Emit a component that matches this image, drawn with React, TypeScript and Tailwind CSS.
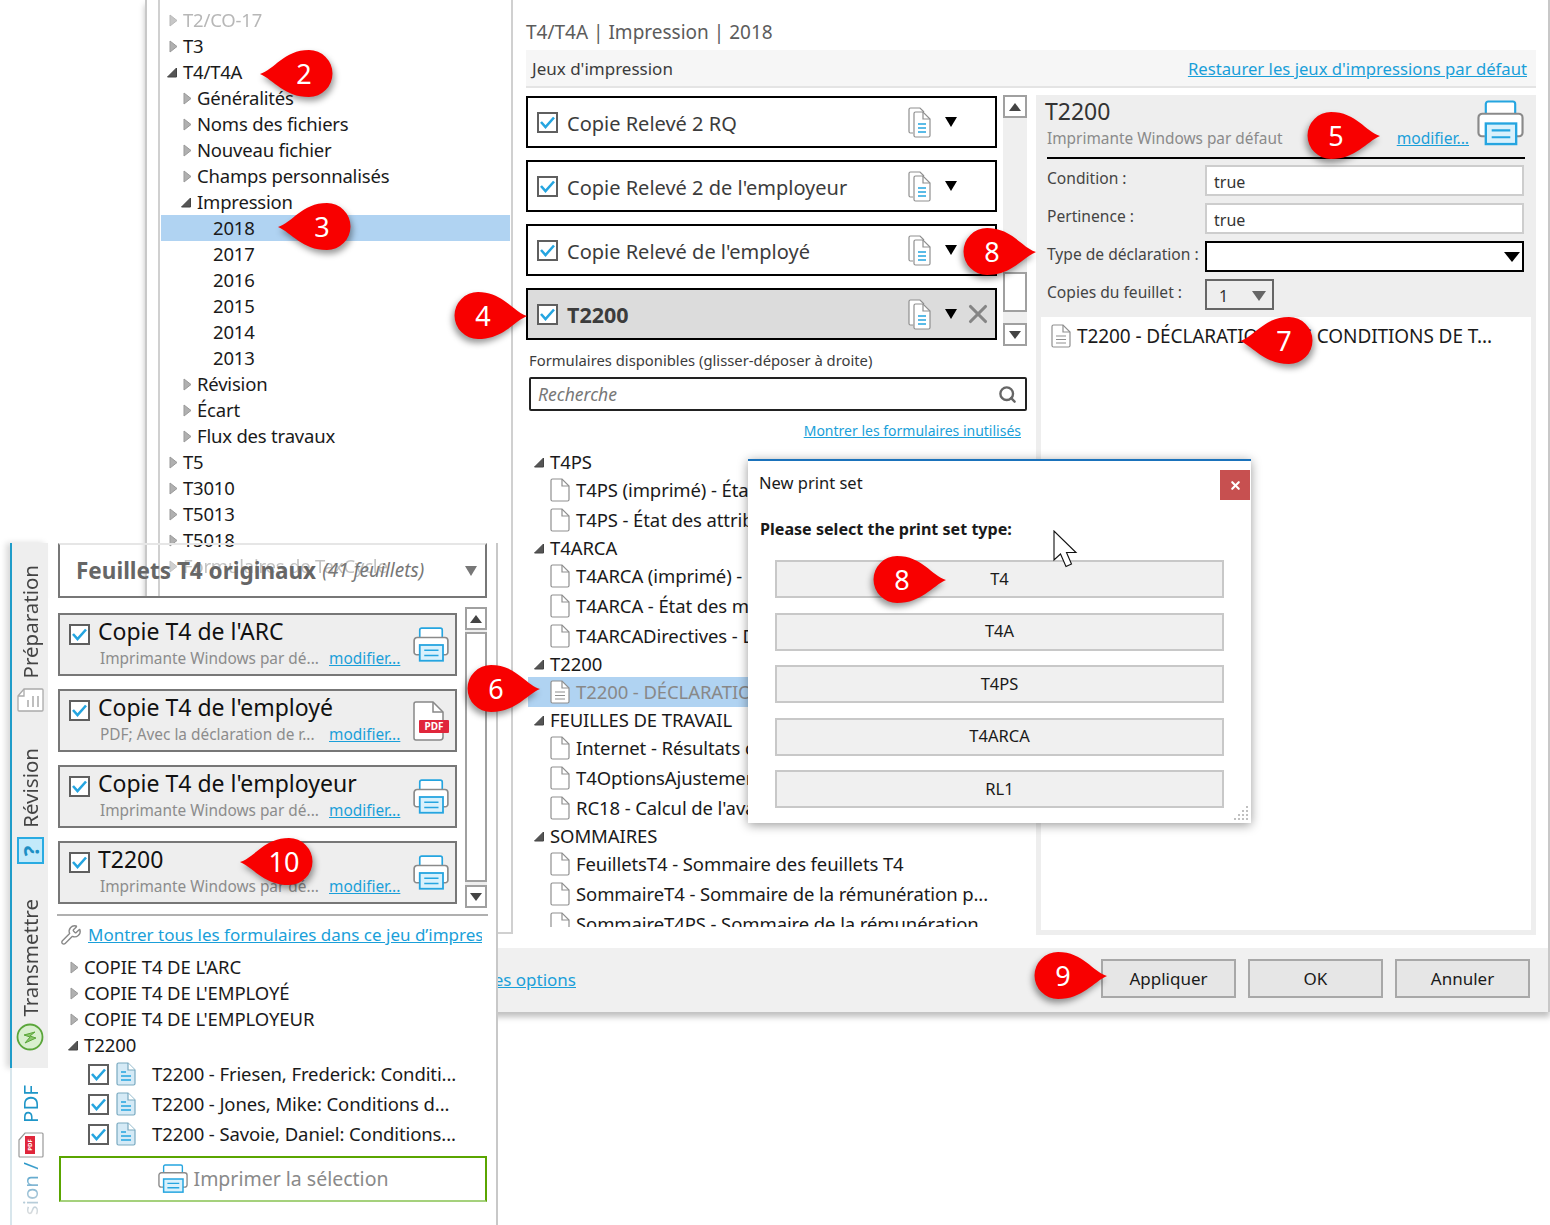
import React from "react";
import { Search, Wrench, X } from "lucide-react";

const Right = () => (
  <svg width="14" height="13" viewBox="0 0 14 13" className="shrink-0"><path d="M1 1 L8 6.5 L1 12 Z" fill="#b0b0b0" stroke="#999" /></svg>
);
const Down = () => (
  <svg width="14" height="13" viewBox="0 0 14 13" className="-ml-[2px] mr-[2px] shrink-0"><path d="M0.5 11 L9.5 11 L9.5 2 Z" fill="#555" stroke="#444" /></svg>
);
const Tri = ({ color = "#000", w = 12, h = 10 }: { color?: string; w?: number; h?: number }) => (
  <svg width={w} height={h} viewBox="0 0 12 10" preserveAspectRatio="none" className="shrink-0"><path d="M0 0 H12 L6 10 Z" fill={color} /></svg>
);
const TriUp = () => (
  <svg width="12" height="8" viewBox="0 0 12 8"><path d="M0 8 H12 L6 0 Z" fill="#444" /></svg>
);
const Check = () => (
  <span className="flex h-[21px] w-[21px] shrink-0 items-center justify-center border-2 border-[#5f5f5f] bg-white">
    <svg width="15" height="13" viewBox="0 0 15 13"><path d="M1 6 L5.5 11 L14 1.5" fill="none" stroke="#25a5e0" strokeWidth="2.6" /></svg>
  </span>
);
const Printer = ({ size = 36 }: { size?: number }) => (
  <svg width={size} height={size} viewBox="0 0 48 48" className="shrink-0">
    <path d="M9 16 V4 a2.5 2.5 0 0 1 2.5-2.5 H36.5 a2.5 2.5 0 0 1 2.5 2.5 V16" fill="#fff" stroke="#25a5e0" strokeWidth="2.2" />
    <path d="M8 37 H5 a3.5 3.5 0 0 1-3.5-3.5 V18 a4 4 0 0 1 4-4 H42.5 a4 4 0 0 1 4 4 V33.5 a3.5 3.5 0 0 1-3.5 3.5 H40" fill="#fff" stroke="#8a8a8a" strokeWidth="2.2" />
    <rect x="9" y="24" width="31" height="21" fill="#d9f1fc" stroke="#25a5e0" strokeWidth="2.4" />
    <path d="M15 31 H34 M15 38 H34" stroke="#25a5e0" strokeWidth="2.2" />
  </svg>
);
const MultiDoc = () => (
  <svg width="25" height="31" viewBox="0 0 25 31" className="shrink-0">
    <path d="M5 26 H2.5 a1.5 1.5 0 0 1-1.5-1.5 V2.5 A1.5 1.5 0 0 1 2.5 1 H12 L16 5" fill="#fff" stroke="#8f8f8f" strokeWidth="1.2" />
    <path d="M8.5 5 H15 L22 12 V28.5 a1.5 1.5 0 0 1-1.5 1.5 H7.5 A1.5 1.5 0 0 1 6 28.5 V6.5 A1.5 1.5 0 0 1 7.5 5 Z" fill="#fff" stroke="#8f8f8f" strokeWidth="1.2" />
    <path d="M15 5 V12 H22" fill="none" stroke="#8f8f8f" strokeWidth="1.2" />
    <path d="M10 17 H18 M10 21 H18 M10 25 H18" stroke="#25a5e0" strokeWidth="1.6" />
  </svg>
);
const Doc = ({ lines = false }: { lines?: boolean }) => (
  <svg width="20" height="24" viewBox="0 0 20 24" className="shrink-0">
    <path d="M2.5 1 H12 L19 8 V21.5 A1.5 1.5 0 0 1 17.5 23 H2.5 A1.5 1.5 0 0 1 1 21.5 V2.5 A1.5 1.5 0 0 1 2.5 1 Z" fill="#fff" stroke="#8f8f8f" strokeWidth="1.2" />
    <path d="M12 1 V8 H19" fill="none" stroke="#8f8f8f" strokeWidth="1.2" />
    {lines && <path d="M5 12 H15 M5 15.5 H15 M5 19 H15" stroke="#8f8f8f" strokeWidth="1.2" />}
  </svg>
);
const BlueDoc = () => (
  <svg width="20" height="24" viewBox="0 0 20 24" className="shrink-0">
    <path d="M2.5 1 H12 L19 8 V21.5 A1.5 1.5 0 0 1 17.5 23 H2.5 A1.5 1.5 0 0 1 1 21.5 V2.5 A1.5 1.5 0 0 1 2.5 1 Z" fill="#d5eaf6" stroke="#79a9c0" strokeWidth="1.2" />
    <path d="M12 1 V8 H19" fill="#fff" stroke="#79a9c0" strokeWidth="1.2" />
    <path d="M5 10 H10 M5 14 H15 M5 18 H15" stroke="#25a5e0" strokeWidth="1.4" />
  </svg>
);
const PdfIcon = () => (
  <div className="relative h-[40px] w-[36px] shrink-0">
    <svg width="32" height="40" viewBox="0 0 32 40" className="absolute left-0 top-0">
      <path d="M3 1 H20 L30 11 V36 A3 3 0 0 1 27 39 H3 A2 2 0 0 1 1 37 V3 A2 2 0 0 1 3 1 Z" fill="#fff" stroke="#888" strokeWidth="1.5" />
      <path d="M20 1 V11 H30" fill="none" stroke="#888" strokeWidth="1.5" />
    </svg>
    <span className="absolute left-[6px] top-[19px] flex h-[13px] w-[30px] items-center justify-center rounded-[1px] bg-[#e0263b] text-[10px] font-bold leading-none text-white">PDF</span>
  </div>
);

const Callout = ({ n, right = false, className }: { n: string; right?: boolean; className: string }) => (
  <div className={`absolute z-30 h-[47px] w-[73px] ${className}`}>
    <svg width="73" height="47" viewBox="0 0 73 47" className={`absolute left-0 top-0 drop-shadow-[2px_4px_3px_rgba(0,0,0,0.4)] ${right ? "-scale-x-100" : ""}`}>
      <path d="M0 24 C 14 20 24 0 49 0 A 23.5 23.5 0 0 1 49 47 C 24 47 14 30 0 24 Z" fill="#f80000" />
    </svg>
    <span className={`absolute top-0 flex h-[47px] w-[40px] items-center justify-center text-[27px] leading-none text-white ${right ? "left-[9px]" : "left-[24px]"}`}>{n}</span>
  </div>
);

const lvl: Record<number, string> = { 0: "pl-[8px]", 1: "pl-[22px]", 2: "pl-[52px]" };
const tree: { t: string; l: number; a?: "r" | "d"; c?: string; sel?: boolean }[] = [
  { t: "T2/CO-17", l: 0, a: "r", c: "text-[#999] opacity-70" },
  { t: "T3", l: 0, a: "r" },
  { t: "T4/T4A", l: 0, a: "d" },
  { t: "Généralités", l: 1, a: "r" },
  { t: "Noms des fichiers", l: 1, a: "r" },
  { t: "Nouveau fichier", l: 1, a: "r" },
  { t: "Champs personnalisés", l: 1, a: "r" },
  { t: "Impression", l: 1, a: "d" },
  { t: "2018", l: 2, sel: true },
  { t: "2017", l: 2 },
  { t: "2016", l: 2 },
  { t: "2015", l: 2 },
  { t: "2014", l: 2 },
  { t: "2013", l: 2 },
  { t: "Révision", l: 1, a: "r" },
  { t: "Écart", l: 1, a: "r" },
  { t: "Flux des travaux", l: 1, a: "r" },
  { t: "T5", l: 0, a: "r" },
  { t: "T3010", l: 0, a: "r" },
  { t: "T5013", l: 0, a: "r" },
  { t: "T5018", l: 0, a: "r" },
  { t: "Formulaires de TaxCycle", l: 0, a: "r", c: "text-[#999] opacity-60" },
];

const forms: { t: string; p?: boolean; sel?: boolean; lines?: boolean }[] = [
  { t: "T4PS", p: true },
  { t: "T4PS (imprimé) - État des attributions" },
  { t: "T4PS - État des attributions" },
  { t: "T4ARCA", p: true },
  { t: "T4ARCA (imprimé) - État" },
  { t: "T4ARCA - État des montants" },
  { t: "T4ARCADirectives - Directives" },
  { t: "T2200", p: true },
  { t: "T2200 - DÉCLARATION DES CONDITIONS", sel: true, lines: true },
  { t: "FEUILLES DE TRAVAIL", p: true },
  { t: "Internet - Résultats de la transmission" },
  { t: "T4OptionsAjustement - Options" },
  { t: "RC18 - Calcul de l'avantage" },
  { t: "SOMMAIRES", p: true },
  { t: "FeuilletsT4 - Sommaire des feuillets T4" },
  { t: "SommaireT4 - Sommaire de la rémunération p..." },
  { t: "SommaireT4PS - Sommaire de la rémunération" },
];

const SetCard = ({ name, active }: { name: string; active?: boolean }) => (
  <div className={`flex h-[52px] items-center border-2 border-black pl-[9px] pr-[5px] ${active ? "bg-[#dcdcdc]" : "bg-white"}`}>
    <Check />
    <span className={`ml-[9px] flex-1 pt-[3px] text-[#3c3c3c] ${active ? "text-[21.5px] font-bold" : "text-[20px]"}`}>{name}</span>
    <MultiDoc />
    <span className="ml-[12px] w-[12px]"><Tri /></span>
    <span className="ml-[9px] w-[24px]">{active && <X size={30} strokeWidth={2.5} color="#858585" className="-ml-[3px]" />}</span>
  </div>
);

const PCard = ({ title, sub, pdf }: { title: string; sub: string; pdf?: boolean }) => (
  <div className="flex h-[63px] border-2 border-[#777] bg-[#eeeeee] pl-[9px] pr-[6px]">
    <div className="mt-[9px]"><Check /></div>
    <div className="ml-[8px] flex-1 pt-[1px]">
      <div className="h-[31px] text-[23px] leading-[31px] text-[#111]">{title}</div>
      <div className="flex h-[24px] items-center pl-[2px] text-[15.4px] text-[#8c8c8c]">
        <span className="w-[229px] whitespace-nowrap">{sub}</span>
        <span className="text-[#1a9fd9] underline">modifier...</span>
      </div>
    </div>
    <div className="flex items-center">{pdf ? <PdfIcon /> : <Printer />}</div>
  </div>
);

const ScrollBtn = ({ up, className }: { up?: boolean; className: string }) => (
  <div className={`flex items-center justify-center border-2 border-[#a0a0a0] bg-white ${className}`}>
    {up ? <TriUp /> : <Tri color="#444" h={8} />}
  </div>
);

const VText = ({ children, className = "" }: { children: React.ReactNode; className?: string }) => (
  <span className={`shrink-0 rotate-180 whitespace-nowrap text-[20.5px] leading-[24px] [writing-mode:vertical-rl] ${className}`}>{children}</span>
);

const Actions = ["Appliquer", "OK", "Annuler"];

export default function App() {
  return (
    <div className="relative h-[1225px] w-[1550px] overflow-hidden bg-white font-['Noto_Sans','Open_Sans',sans-serif] text-[#1a1a1a]">
      {/* Back window */}
      <div className="absolute left-[145px] top-0 flex h-[1012px] w-[1405px] flex-col border-l-2 border-r-2 border-[#c8c8c8] bg-white shadow-[0_5px_6px_rgba(0,0,0,0.25)]">
        <div className="flex h-[948px]">
          {/* settings tree */}
          <div className="ml-[11px] h-[934px] w-[355px] shrink-0 overflow-hidden border-b-2 border-l-2 border-r-2 border-[#d0d0d0] pt-[7px] text-[18.5px] tracking-[-0.2px]">
            {tree.map((r) => (
              <div key={r.t} className={`ml-[1px] mr-[1px] flex h-[26px] items-center ${lvl[r.l]} ${r.sel ? "bg-[#b0d3f2]" : ""} ${r.c ?? ""}`}>
                {r.a === "r" && <Right />}
                {r.a === "d" && <Down />}
                <span className="whitespace-nowrap">{r.t}</span>
              </div>
            ))}
          </div>
          {/* main column */}
          <div className="ml-[13px] flex w-[1010px] flex-col">
            <div className="flex h-[50px] items-center pt-[14px] text-[19px] text-[#5c5c5c]">T4/T4A | Impression | 2018</div>
            <div className="flex h-[38px] items-center justify-between border-b-2 border-[#e4e4e4] bg-[#f6f6f6] pl-[6px] pr-[9px] pt-[1px]">
              <span className="text-[17px] text-[#3c3c3c]">Jeux d'impression</span>
              <span className="text-[16.7px] text-[#1a9fd9] underline">Restaurer les jeux d'impressions par défaut</span>
            </div>
            <div className="flex flex-1">
              {/* left part */}
              <div className="flex w-[510px] flex-col">
                <div className="flex pt-[8px]">
                  <div className="flex w-[471px] flex-col gap-[12px]">
                    <SetCard name="Copie Relevé 2 RQ" />
                    <SetCard name="Copie Relevé 2 de l'employeur" />
                    <SetCard name="Copie Relevé de l'employé" />
                    <SetCard name="T2200" active />
                  </div>
                  <div className="-mt-[1px] ml-[6px] flex h-[251px] w-[24px] flex-col bg-[#efefef]">
                    <ScrollBtn up className="h-[23px]" />
                    <div className="flex-1" />
                    <div className="mb-[11px] h-[40px] border-2 border-[#a0a0a0] bg-white" />
                    <ScrollBtn className="h-[23px]" />
                  </div>
                </div>
                <div className="mb-[3px] flex h-[28px] items-center pl-[3px] text-[14.8px] text-[#3c3c3c]">Formulaires disponibles (glisser-déposer à droite)</div>
                <div className="ml-[3px] flex h-[34px] w-[498px] items-center justify-between rounded-[2px] border-2 border-[#222] pl-[7px] pr-[8px]">
                  <span className="text-[17.5px] italic text-[#777]">Recherche</span>
                  <Search size={19} strokeWidth={3} color="#666" />
                </div>
                <div className="flex h-[36px] w-[495px] items-end justify-end pb-[6px] text-[14px] text-[#1a9fd9] underline">Montrer les formulaires inutilisés</div>
                <div className="h-[480px] w-[504px] overflow-hidden pt-[2px] text-[18.5px] tracking-[-0.1px]">
                  {forms.map((f) =>
                    f.p ? (
                      <div key={f.t} className="flex h-[26px] items-center pl-[10px]">
                        <span className="flex w-[14px]"><Down /></span>
                        <span className="whitespace-nowrap">{f.t}</span>
                      </div>
                    ) : (
                      <div key={f.t} className={`ml-[2px] flex h-[30px] items-center gap-[6px] pl-[22px] ${f.sel ? "bg-[#b0d3f2] text-[#888]" : ""}`}>
                        <Doc lines={f.lines} />
                        <span className="whitespace-nowrap">{f.t}</span>
                      </div>
                    )
                  )}
                </div>
              </div>
              {/* right panel */}
              <div className="mt-[7px] flex h-[840px] w-[500px] flex-col bg-[#eeeeee]">
                <div className="flex h-[62px] pl-[11px] pr-[12px]">
                  <div className="flex-1">
                    <div className="-ml-[2px] h-[31px] text-[23px] leading-[32px] text-[#333]">T2200</div>
                    <div className="text-[15.4px] leading-[25px] text-[#8a8a8a]">Imprimante Windows par défaut</div>
                  </div>
                  <span className="mr-[8px] self-end pb-[7px] text-[15.6px] text-[#1a9fd9] underline">modifier...</span>
                  <div className="pt-[5px]"><Printer size={47} /></div>
                </div>
                <div className="mx-[11px] h-[2px] bg-black" />
                <div className="mt-[6px] grid grid-cols-[158px_319px] gap-y-[7px] pl-[11px] text-[15.6px] text-[#444]">
                  <span className="whitespace-nowrap leading-[26px]">Condition :</span>
                  <div className="flex h-[31px] items-center border-2 border-[#cdcdcd] bg-white pl-[7px] pt-[2px] text-[16px] text-[#333]">true</div>
                  <span className="whitespace-nowrap leading-[26px]">Pertinence :</span>
                  <div className="flex h-[31px] items-center border-2 border-[#cdcdcd] bg-white pl-[7px] pt-[2px] text-[16px] text-[#333]">true</div>
                  <span className="whitespace-nowrap leading-[26px]">Type de déclaration :</span>
                  <div className="flex h-[31px] items-center justify-end border-2 border-black bg-white pr-[2px]"><Tri w={16} /></div>
                  <span className="whitespace-nowrap leading-[26px]">Copies du feuillet :</span>
                  <div className="flex h-[31px] w-[69px] items-center justify-between border-2 border-[#666] pl-[12px] pr-[6px] pt-[2px] text-[16px] text-[#333]">1<Tri color="#666" w={14} /></div>
                </div>
                <div className="mx-[5px] mt-[7px] h-[613px] bg-white pl-[10px] pt-[5px]">
                  <div className="flex items-center gap-[6px] whitespace-nowrap text-[19px] tracking-[-0.1px]">
                    <Doc lines />
                    T2200 - DÉCLARATION DES CONDITIONS DE T...
                  </div>
                </div>
              </div>
            </div>
          </div>
        </div>
        {/* bottom bar */}
        <div className="flex h-[64px] items-start bg-[#f0f0f0] pr-[18px] pt-[11px]">
          <div className="w-[429px] self-center pb-[11px] text-right text-[17px] text-[#1a9fd9] underline">Toutes les options</div>
          <div className="ml-auto flex gap-[12px]">
            {Actions.map((a) => (
              <div key={a} className="flex h-[39px] w-[135px] items-center justify-center border-2 border-[#a8a8a8] bg-[#e6e6e6] text-[17px]">{a}</div>
            ))}
          </div>
        </div>
      </div>

      {/* Front panel */}
      <div className="absolute left-[10px] top-[543px] z-10 flex h-[682px] w-[488px]">
        <div className="flex w-[38px] shrink-0 flex-col">
          <div className="flex h-[525px] flex-col items-center border-l-2 border-[#1f9cc9] bg-[#eeeeee] pt-[22px] text-[#444] shadow-[-4px_0_6px_rgba(0,0,0,0.15)]">
            <VText>Préparation</VText>
            <svg width="28" height="24" viewBox="0 0 28 24" className="mt-[10px] shrink-0">
              <path d="M2 8 L8 1 H26 a1 1 0 0 1 1 1 V22 a1 1 0 0 1-1 1 H3 a1 1 0 0 1-1-1 Z" fill="#fff" stroke="#aaa" strokeWidth="1.3" />
              <path d="M2 8 H8 V1" fill="none" stroke="#aaa" strokeWidth="1.3" />
              <path d="M12 19 V12 M17 19 V8 M22 19 V8" stroke="#aaa" strokeWidth="1.5" />
            </svg>
            <VText className="mt-[36px]">Révision</VText>
            <div className="mt-[9px] flex h-[27px] w-[27px] shrink-0 items-center justify-center border-2 border-[#29abe2] bg-[#c3eafa] text-[22px] font-bold leading-none text-[#1d8fc4]"><span className="-rotate-90">?</span></div>
            <VText className="mt-[35px]">Transmettre</VText>
            <svg width="28" height="28" viewBox="0 0 28 28" className="mt-[6px] shrink-0">
              <circle cx="14" cy="14" r="12.5" fill="#d9efcf" stroke="#5aa63a" strokeWidth="1.8" />
              <path d="M19 9 L8 12 L14 14 L9 20 L20 15 L14 13 Z" fill="#8ac66c" stroke="#5aa63a" strokeWidth="1" />
            </svg>
          </div>
          <div className="flex flex-1 flex-col items-center border-l-2 border-[#d8e6ec] bg-white pt-[17px] text-[#1f96c8]">
            <VText>PDF</VText>
            <div className="relative mt-[9px] h-[26px] w-[26px] shrink-0">
              <svg width="27" height="26" viewBox="0 0 27 26" className="absolute left-0 top-0">
                <path d="M2 8 L8 1 H25 a1 1 0 0 1 1 1 V24 a1 1 0 0 1-1 1 H3 a1 1 0 0 1-1-1 Z" fill="#fff" stroke="#999" strokeWidth="1.2" />
              </svg>
              <span className="absolute left-[8px] top-[4px] flex h-[18px] w-[10px] items-center justify-center bg-[#e0263b]"><span className="-rotate-90 text-[6px] font-bold leading-none text-white">PDF</span></span>
            </div>
            <VText className="mt-[4px] bg-gradient-to-t from-[#1f96c8] to-[#dddddd] bg-clip-text text-transparent">sion /</VText>
          </div>
        </div>
        <div className="flex w-[450px] flex-col border-r-2 border-[#c8c8c8]">
          {/* dropdown, translucent over the tree behind it */}
          <div className="ml-[10px] mr-[9px] flex h-[55px] shrink-0 items-center border-2 border-t-[#e6e6e6] border-x-[#777] border-b-[#777] pl-[16px] pr-[8px]">
            <span className="text-[22.5px] font-bold text-[#666]">Feuillets T4 originaux</span>
            <span className="ml-[6px] flex-1 text-[19px] italic text-[#777]">(41 feuillets)</span>
            <Tri color="#777" />
          </div>
          <div className="flex flex-1 flex-col bg-white pl-[10px]">
            <div className="flex pt-[15px]">
              <div className="flex w-[399px] flex-col gap-[13px]">
                <PCard title="Copie T4 de l'ARC" sub="Imprimante Windows par dé..." />
                <PCard title="Copie T4 de l'employé" sub="PDF; Avec la déclaration de r..." pdf />
                <PCard title="Copie T4 de l'employeur" sub="Imprimante Windows par dé..." />
                <PCard title="T2200" sub="Imprimante Windows par dé..." />
              </div>
              <div className="-mt-[6px] ml-[8px] flex h-[301px] w-[22px] flex-col bg-[#eeeeee]">
                <ScrollBtn up className="h-[23px]" />
                <div className="mt-[2px] flex-1 border-2 border-[#a0a0a0] bg-white" />
                <ScrollBtn className="mt-[3px] h-[23px]" />
              </div>
            </div>
            <div className="-ml-[1px] mt-[6px] h-[2px] w-[431px] bg-[#b0b0b0]" />
            <div className="flex h-[37px] w-[424px] items-center gap-[6px] overflow-hidden pl-[2px] pt-[1px]">
              <Wrench size={22} strokeWidth={1.5} color="#888" className="shrink-0" />
              <span className="whitespace-nowrap text-[17px] text-[#1a9fd9] underline">Montrer tous les formulaires dans ce jeu d’impression</span>
            </div>
            <div className="pt-[1px] text-[18.5px] tracking-[-0.1px]">
              {["COPIE T4 DE L'ARC", "COPIE T4 DE L'EMPLOYÉ", "COPIE T4 DE L'EMPLOYEUR"].map((t) => (
                <div key={t} className="flex h-[26px] items-center pl-[12px]"><Right />{t}</div>
              ))}
              <div className="flex h-[26px] items-center pl-[12px]"><span className="flex w-[14px]"><Down /></span>T2200</div>
            </div>
            <div className="pt-[1px] text-[18.5px] tracking-[-0.1px]">
              {["T2200 - Friesen, Frederick: Conditi...", "T2200 - Jones, Mike: Conditions d...", "T2200 - Savoie, Daniel: Conditions..."].map((t) => (
                <div key={t} className="flex h-[30px] items-center pl-[30px]">
                  <Check />
                  <span className="ml-[7px]"><BlueDoc /></span>
                  <span className="ml-[16px] whitespace-nowrap">{t}</span>
                </div>
              ))}
            </div>
            <div className="ml-[1px] mt-[7px] flex h-[46px] w-[428px] items-center justify-center gap-[6px] border-2 border-[#5aa500] border-b-[#a5d17c] text-[19.5px] text-[#8a8a8a]">
              <Printer size={30} />
              Imprimer la sélection
            </div>
          </div>
        </div>
      </div>

      {/* Dialog */}
      <div className="absolute left-[748px] top-[459px] z-20 h-[364px] w-[503px] border-t-2 border-[#1a72bb] bg-white text-[16.5px] shadow-[0_2px_10px_rgba(0,0,0,0.4)]">
        <div className="flex h-[40px] items-start justify-between pl-[11px] pr-[1px] pt-[9px]">
          <span className="pt-[1px] leading-[24px]">New print set</span>
          <span className="flex h-[30px] w-[30px] items-center justify-center bg-[#c75050]"><X size={13} strokeWidth={4} color="#fff" /></span>
        </div>
        <div className="mt-[16px] pl-[12px] text-[16.1px] font-bold leading-[24px]">Please select the print set type:</div>
        <div className="ml-[27px] mt-[19px] flex w-[449px] flex-col gap-[14.5px]">
          {["T4", "T4A", "T4PS", "T4ARCA", "RL1"].map((b) => (
            <div key={b} className="flex h-[38px] items-center justify-center border-2 border-[#c8c8c8] bg-[#f0f0f0]">{b}</div>
          ))}
        </div>
        <svg width="16" height="16" viewBox="0 0 16 16" className="absolute bottom-[2px] right-[2px]">
          <path d="M13 1h2v2h-2zM9 5h2v2H9zM13 5h2v2h-2zM5 9h2v2H5zM9 9h2v2H9zM13 9h2v2h-2zM1 13h2v2H1zM5 13h2v2H5zM9 13h2v2H9zM13 13h2v2h-2z" fill="#c0c0c0" />
        </svg>
        <svg width="25" height="38" viewBox="0 0 25 38" className="absolute left-[305px] top-[69px]">
          <path d="M1 1 V30 L7.5 24 L13 36.5 L18.5 34 L13.5 22.5 L23 22.5 Z" fill="#fff" stroke="#111" strokeWidth="1.1" />
        </svg>
      </div>

      {/* Callouts */}
      <Callout n="2" className="left-[260px] top-[50px]" />
      <Callout n="3" className="left-[278px] top-[203px]" />
      <Callout n="4" right className="left-[454px] top-[292px]" />
      <Callout n="5" right className="left-[1307px] top-[112px]" />
      <Callout n="8" right className="left-[963px] top-[228px]" />
      <Callout n="7" className="left-[1240px] top-[317px]" />
      <Callout n="6" right className="left-[467px] top-[665px]" />
      <Callout n="8" right className="left-[873px] top-[556px]" />
      <Callout n="9" right className="left-[1034px] top-[952px]" />
      <Callout n="10" className="left-[240px] top-[838px]" />
    </div>
  );
}
